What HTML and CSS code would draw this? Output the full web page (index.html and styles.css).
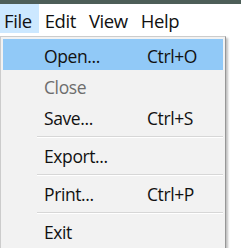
FILE: index.html
```html
<!DOCTYPE html>
<html>
<head>
<meta charset="utf-8">
<link rel="stylesheet" href="styles.css">
</head>
<body>
<div class="topstrip"></div>
<div class="menubar">
  <span class="mb-item active">File</span>
  <span class="mb-item">Edit</span>
  <span class="mb-item">View</span>
  <span class="mb-item">Help</span>
</div>
<div class="dropdown">
  <div class="item hover"><span class="label">Open...</span><span class="key">Ctrl+O</span></div>
  <div class="item disabled"><span class="label">Close</span></div>
  <div class="item"><span class="label">Save...</span><span class="key">Ctrl+S</span></div>
  <div class="sep"></div>
  <div class="item"><span class="label">Export...</span></div>
  <div class="sep"></div>
  <div class="item"><span class="label">Print...</span><span class="key">Ctrl+P</span></div>
  <div class="sep"></div>
  <div class="item"><span class="label">Exit</span></div>
</div>
</body>
</html>
```
FILE: styles.css
```css
html, body {
  margin: 0;
  padding: 0;
  background: #ffffff;
  font-family: "Open Sans", "Noto Sans", sans-serif;
  font-size: 17.5px;
  letter-spacing: -0.4px;
  color: #111;
  overflow: hidden;
}
.topstrip {
  height: 4px;
  background: #4d5e58;
}
.menubar {
  display: flex;
  height: 29px;
  background: #fff;
  font-size: 18.5px;
}
.mb-item {
  box-sizing: border-box;
  height: 29px;
  padding: 4px 5px 0 4px;
  line-height: 25px;
  margin-right: 4px;
}
.mb-item.active {
  background: #cce8ff;
  padding-right: 7px;
  margin-right: 2px;
}
.dropdown {
  margin-top: 3px;
  width: 220px;
  background: #f2f2f2;
  border: 1px solid #cccccc;
  border-right-color: #979797;
  padding: 2px 2px 10px 2px;
  box-shadow: 2px 2px 2px rgba(0,0,0,0.25);
}
.item {
  display: flex;
  box-sizing: border-box;
  height: 31px;
  padding: 3px 0 0 41px;
  line-height: 28px;
}
.item.hover {
  background: #91c9f7;
}
.item.disabled {
  color: #6d6d6d;
}
.label {
  width: 103px;
}
.key {
  flex: 1;
}
.sep {
  height: 1px;
  margin: 4px 0 1px 34px;
  border-bottom: 1px solid #ffffff;
  background: #d7d7d7;
}
```
